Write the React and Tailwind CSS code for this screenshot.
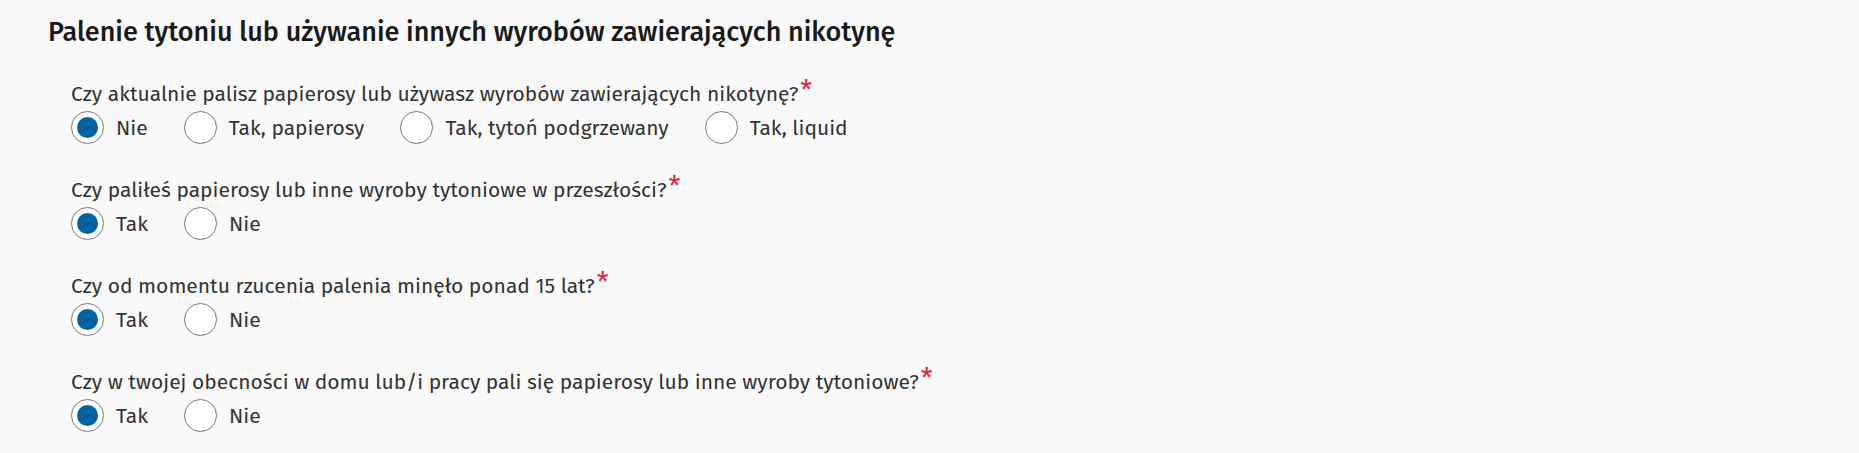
import React, { useState } from 'react';

const initialQuestions = [
  {
    id: 'current',
    label: 'Czy aktualnie palisz papierosy lub używasz wyrobów zawierających nikotynę?',
    options: ['Nie', 'Tak, papierosy', 'Tak, tytoń podgrzewany', 'Tak, liquid'],
    value: 'Nie',
  },
  {
    id: 'past',
    label: 'Czy paliłeś papierosy lub inne wyroby tytoniowe w przeszłości?',
    options: ['Tak', 'Nie'],
    value: 'Tak',
  },
  {
    id: 'quit15',
    label: 'Czy od momentu rzucenia palenia minęło ponad 15 lat?',
    options: ['Tak', 'Nie'],
    value: 'Tak',
  },
  {
    id: 'passive',
    label: 'Czy w twojej obecności w domu lub/i pracy pali się papierosy lub inne wyroby tytoniowe?',
    options: ['Tak', 'Nie'],
    value: 'Tak',
  },
];

const Radio = ({ checked, label, onChange }) => (
  <label className="flex items-center gap-[12px] cursor-pointer">
    <span className="flex items-center justify-center w-[33px] h-[33px] rounded-full border border-[#75757f] bg-white">
      {checked && <span className="w-[21px] h-[21px] rounded-full bg-[#0063a5]" />}
    </span>
    <input type="radio" className="hidden" checked={checked} onChange={onChange} />
    <span className="text-[21px] leading-[24px] text-[#333333]">{label}</span>
  </label>
);

const App = () => {
  const [questions, setQuestions] = useState(initialQuestions);

  const setValue = (id, value) => {
    setQuestions(questions.map((q) => (q.id === id ? { ...q, value } : q)));
  };

  return (
    <div
      className="w-[1859px] h-[453px] bg-[#f9f9f9] pl-[48px] pt-[15px] overflow-hidden"
      style={{ fontFamily: '"Fira Sans", Roboto, "Noto Sans", sans-serif' }}
    >
      <h2 className="text-[27px] leading-[34px] font-medium text-[#1b1b1b]">
        Palenie tytoniu lub używanie innych wyrobów zawierających nikotynę
      </h2>

      <div className="pl-[23px] pt-[30px] space-y-[31px]">
        {questions.map((q) => (
          <fieldset key={q.id}>
            <legend className="text-[21px] leading-[24px] text-[#333333]">
              {q.label}
              <span className="text-[#d7263d] text-[27px] leading-none relative top-[-1px] ml-[2px]">*</span>
            </legend>
            <div className="flex items-center gap-[36px] mt-[5px]">
              {q.options.map((opt) => (
                <Radio
                  key={opt}
                  label={opt}
                  checked={q.value === opt}
                  onChange={() => setValue(q.id, opt)}
                />
              ))}
            </div>
          </fieldset>
        ))}
      </div>
    </div>
  );
};

export default App;
